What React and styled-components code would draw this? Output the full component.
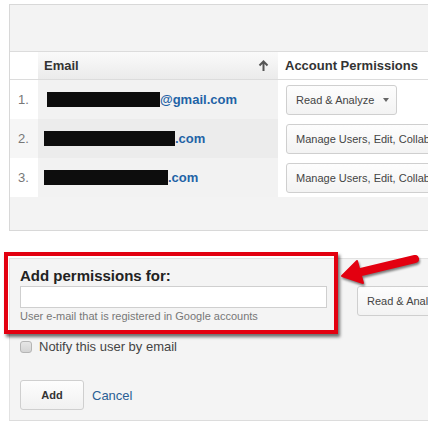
import React from "react";
import styled, { createGlobalStyle } from "styled-components";

const GlobalStyle = createGlobalStyle`
  html, body {
    margin: 0;
    padding: 0;
    background: #fff;
    overflow: hidden;
  }
  body {
    font-family: "Liberation Sans", Arial, sans-serif;
    color: #333;
  }
`;

const Page = styled.div`
  position: relative;
  width: 428px;
  height: 431px;
  overflow: hidden;
`;

const UsersPanel = styled.div`
  margin: 4px 0 0 9px;
  width: 560px;
  background: #f3f3f3;
  border: 1px solid #d8d8d8;
  border-right: none;
`;

const TopSpace = styled.div`
  height: 46px;
`;

const Table = styled.div`
  display: grid;
  grid-template-columns: 28px 240px 1fr;
  border-top: 1px solid #dcdcdc;
`;

const HeadCell = styled.div`
  height: 27px;
  display: flex;
  align-items: center;
  justify-content: space-between;
  padding: 0 9px 0 ${(p) => p.$pad || 8}px;
  border-bottom: 1px solid #dcdcdc;
  font-size: 13px;
  font-weight: bold;
  color: #333;
  background: ${(p) =>
    p.$sorted ? "linear-gradient(#fafafa, #ebebeb)" : "#fff"};
`;

const Cell = styled.div`
  height: 39px;
  display: flex;
  align-items: center;
  padding-left: ${(p) => p.$pad || 0}px;
  background: ${(p) => p.$bg};
`;

const RowNum = styled.span`
  font-size: 13px;
  color: #777;
`;

const Redacted = styled.span`
  display: inline-block;
  width: ${(p) => p.$w}px;
  height: 15px;
  background: #0d0d0d;
`;

const EmailLink = styled.a`
  font-size: 13px;
  font-weight: bold;
  color: #1f63a6;
  text-decoration: none;
`;

const SelectBtn = styled.div`
  flex: none;
  box-sizing: border-box;
  height: 30px;
  width: ${(p) => (p.$w ? `${p.$w}px` : "auto")};
  display: flex;
  align-items: center;
  gap: 9px;
  padding: 0 9px;
  border: 1px solid #cfcfcf;
  border-radius: 3px;
  background: linear-gradient(#fdfdfd, #f3f3f3);
  font-size: 11px;
  color: #444;
  white-space: nowrap;
`;

const Caret = styled.span`
  width: 0;
  height: 0;
  border-left: 3.5px solid transparent;
  border-right: 3.5px solid transparent;
  border-top: 4px solid #666;
`;

const Footer = styled.div`
  height: 33px;
`;

const AddPanel = styled.div`
  position: relative;
  margin: 27px 0 0 9px;
  width: 560px;
  background: #f4f4f4;
  border-top: 1px solid #e2e2e2;
  border-left: 1px solid #e2e2e2;
  border-bottom: 1px solid #dcdcdc;
  padding-bottom: 10px;
`;

const FormRow = styled.div`
  display: flex;
  align-items: flex-start;
`;

const Highlight = styled.div`
  box-sizing: border-box;
  width: 334px;
  height: 82px;
  margin: -7px 0 0 -6px;
  padding: 11px 0 0 12px;
  border: 4px solid #e30010;
  box-shadow: 2px 3px 3px rgba(0, 0, 0, 0.55);
  position: relative;
  z-index: 1;
`;

const Label = styled.div`
  font-size: 15px;
  font-weight: bold;
  color: #222;
  line-height: 17px;
`;

const TextInput = styled.input`
  box-sizing: border-box;
  display: block;
  width: 307px;
  height: 22px;
  margin-top: 2px;
  border: 1px solid #cfcfcf;
  background: #fff;
  outline: none;
`;

const Hint = styled.div`
  margin-top: 2px;
  font-size: 11px;
  line-height: 13px;
  color: #777;
`;

const SideSelect = styled.div`
  margin: 27px 0 0 19px;
`;

const CheckRow = styled.label`
  display: flex;
  align-items: center;
  gap: 7px;
  margin: 5px 0 0 10px;
  font-size: 13px;
  color: #444;
  line-height: 16px;
`;

const Check = styled.span`
  box-sizing: border-box;
  width: 12px;
  height: 12px;
  border: 1px solid #b5b5b5;
  border-radius: 3px;
  background: linear-gradient(#e6e6e6, #d4d4d4);
`;

const Actions = styled.div`
  display: flex;
  align-items: center;
  gap: 8px;
  margin: 25px 0 0 10px;
`;

const AddBtn = styled.button`
  box-sizing: border-box;
  width: 64px;
  height: 30px;
  border: 1px solid #cfcfcf;
  border-radius: 3px;
  background: linear-gradient(#fdfdfd, #f1f1f1);
  font-family: inherit;
  font-size: 11px;
  font-weight: bold;
  color: #333;
`;

const CancelLink = styled.a`
  font-size: 13px;
  color: #2b5f94;
  text-decoration: none;
`;

const Arrow = styled.svg`
  position: absolute;
  left: 330px;
  top: 244px;
  overflow: visible;
  filter: drop-shadow(1px 2px 1px rgba(0, 0, 0, 0.5));
  z-index: 2;
`;

const SortArrow = () => (
  <svg width="11" height="12" viewBox="0 0 11 12">
    <path d="M5.5 11V2M1.5 5.5L5.5 1.5L9.5 5.5" fill="none" stroke="#555" strokeWidth="2" />
  </svg>
);

const users = [
  { n: 1, w: 113, tail: "@gmail.com", perm: "Read & Analyze", caret: true },
  { n: 2, w: 131, tail: ".com", perm: "Manage Users, Edit, Collaborate, Read & Analyze" },
  { n: 3, w: 124, tail: ".com", perm: "Manage Users, Edit, Collaborate, Read & Analyze" },
];

export default function App() {
  return (
    <Page>
      <GlobalStyle />
      <UsersPanel>
        <TopSpace />
        <Table>
          <HeadCell />
          <HeadCell $sorted $pad={6}>
            Email
            <SortArrow />
          </HeadCell>
          <HeadCell $pad={7}>Account Permissions</HeadCell>
          {users.map((u) => {
            const even = u.n % 2 === 0;
            return (
              <React.Fragment key={u.n}>
                <Cell $pad={8} $bg={even ? "#f6f6f6" : "#fff"}>
                  <RowNum>{u.n}.</RowNum>
                </Cell>
                <Cell $pad={u.n === 1 ? 9 : 6} $bg={even ? "#ececec" : "#f2f2f2"}>
                  <Redacted $w={u.w} />
                  <EmailLink href="#">{u.tail}</EmailLink>
                </Cell>
                <Cell $pad={8} $bg="#fff">
                  <SelectBtn $w={u.caret ? 111 : 0}>
                    {u.perm}
                    {u.caret && <Caret />}
                  </SelectBtn>
                </Cell>
              </React.Fragment>
            );
          })}
        </Table>
        <Footer />
      </UsersPanel>

      <AddPanel>
        <FormRow>
          <Highlight>
            <Label>Add permissions for:</Label>
            <TextInput type="text" />
            <Hint>User e-mail that is registered in Google accounts</Hint>
          </Highlight>
          <SideSelect>
            <SelectBtn>Read &amp; Analyze</SelectBtn>
          </SideSelect>
        </FormRow>
        <CheckRow>
          <Check />
          Notify this user by email
        </CheckRow>
        <Actions>
          <AddBtn>Add</AddBtn>
          <CancelLink href="#">Cancel</CancelLink>
        </Actions>
      </AddPanel>

      <Arrow width="92" height="50" viewBox="330 244 92 50">
        <line x1="361" y1="272" x2="415" y2="259" stroke="#e30010" strokeWidth="8" strokeLinecap="round" />
        <polygon points="342,276 357,261 363,283" fill="#e30010" stroke="#e30010" strokeWidth="2" strokeLinejoin="round" />
      </Arrow>
    </Page>
  );
}
